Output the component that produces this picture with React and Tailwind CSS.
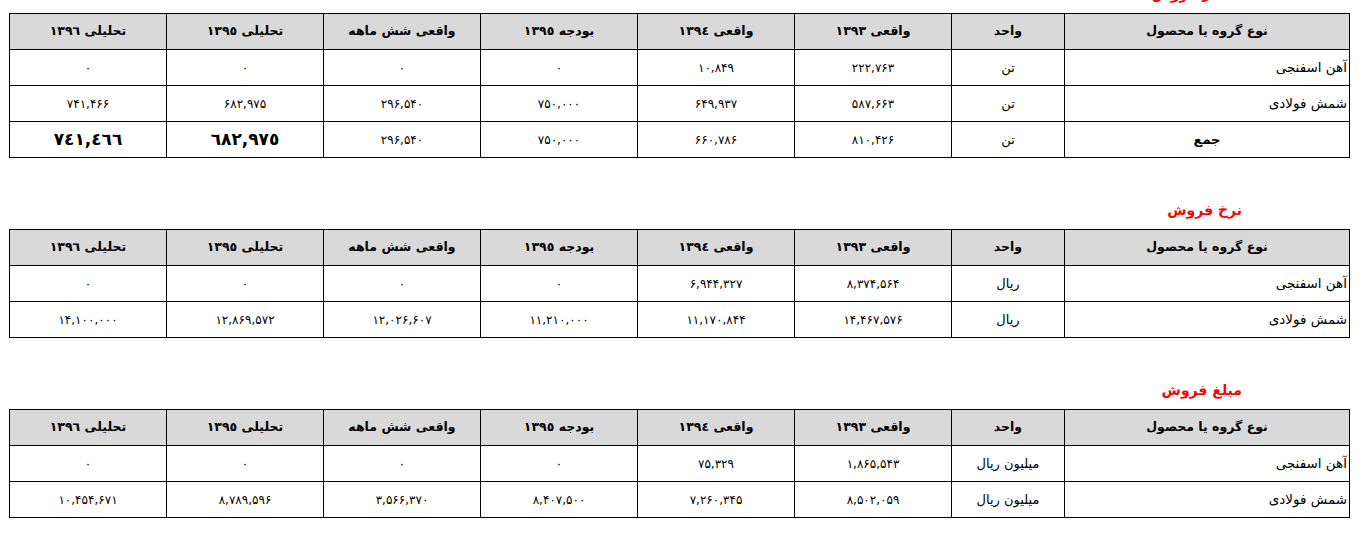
import React from "react";

const headers = [
  "نوع گروه یا محصول",
  "واحد",
  "واقعی ١٣٩٣",
  "واقعی ١٣٩٤",
  "بودجه ١٣٩٥",
  "واقعی شش ماهه",
  "تحلیلی ١٣٩٥",
  "تحلیلی ١٣٩٦",
];

const widths = ["w-[285px]", "w-[113px]", "w-[157px]", "w-[157px]", "w-[157px]", "w-[157px]", "w-[157px]", "w-[157px]"];

const sections = [
  {
    title: "مقدار فروش",
    rows: [
      { name: "آهن اسفنجی", unit: "تن", vals: ["۲۲۲,۷۶۳", "۱۰,۸۴۹", "۰", "۰", "۰", "۰"] },
      { name: "شمش فولادی", unit: "تن", vals: ["۵۸۷,۶۶۳", "۶۴۹,۹۳۷", "۷۵۰,۰۰۰", "۲۹۶,۵۴۰", "۶۸۲,۹۷۵", "۷۴۱,۴۶۶"] },
      { name: "جمع", total: true, unit: "تن", vals: ["۸۱۰,۴۲۶", "۶۶۰,۷۸۶", "۷۵۰,۰۰۰", "۲۹۶,۵۴۰", "٦٨٢,٩٧٥", "٧٤١,٤٦٦"], boldFrom: 4 },
    ],
  },
  {
    title: "نرخ فروش",
    rows: [
      { name: "آهن اسفنجی", unit: "ریال", vals: ["۸,۳۷۴,۵۶۴", "۶,۹۴۴,۳۲۷", "۰", "۰", "۰", "۰"] },
      { name: "شمش فولادی", unit: "ریال", vals: ["۱۴,۴۶۷,۵۷۶", "۱۱,۱۷۰,۸۴۴", "۱۱,۲۱۰,۰۰۰", "۱۲,۰۲۶,۶۰۷", "۱۲,۸۶۹,۵۷۲", "۱۴,۱۰۰,۰۰۰"] },
    ],
  },
  {
    title: "مبلغ فروش",
    rows: [
      { name: "آهن اسفنجی", unit: "میلیون ریال", vals: ["۱,۸۶۵,۵۴۳", "۷۵,۳۲۹", "۰", "۰", "۰", "۰"] },
      { name: "شمش فولادی", unit: "میلیون ریال", vals: ["۸,۵۰۲,۰۵۹", "۷,۲۶۰,۳۴۵", "۸,۴۰۷,۵۰۰", "۳,۵۶۶,۳۷۰", "۸,۷۸۹,۵۹۶", "۱۰,۴۵۴,۶۷۱"] },
    ],
  },
];

function Section({ s }) {
  return (
    <div className="flex flex-col">
      <div className="h-[28px] pr-[108px] text-right text-[14px] font-bold leading-[18px] text-[#ff0000]">
        {s.title}
      </div>
      <table className="w-[1340px] table-fixed border-collapse border border-black">
        <thead>
          <tr className="h-[36px] bg-[#d9d9d9]">
            {headers.map((h, i) => (
              <th key={i} className={`${widths[i]} border border-black p-0 text-center text-[12.5px] font-bold text-black`}>
                {h}
              </th>
            ))}
          </tr>
        </thead>
        <tbody>
          {s.rows.map((r, ri) => (
            <tr key={ri} className="h-[36px]">
              {r.total ? (
                <td className="border border-black p-0 text-center text-[13px] font-bold">{r.name}</td>
              ) : (
                <td className="border border-black py-0 pl-0 pr-[2px] text-right text-[13.5px]">{r.name}</td>
              )}
              <td className="border border-black p-0 text-center text-[13px]">{r.unit}</td>
              {r.vals.map((v, vi) => (
                <td
                  key={vi}
                  className={
                    r.boldFrom !== undefined && vi >= r.boldFrom
                      ? "border border-black p-0 text-center text-[17px] font-bold"
                      : "border border-black p-0 text-center text-[12px]"
                  }
                >
                  {v}
                </td>
              ))}
            </tr>
          ))}
        </tbody>
      </table>
    </div>
  );
}

export default function App() {
  return (
    <div dir="rtl" className="bg-white text-black" style={{ fontFamily: '"DejaVu Sans", sans-serif' }}>
      <div className="-mt-[15px] flex flex-col gap-[43px] pr-[16px] pl-[10px]">
        {sections.map((s, i) => (
          <Section key={i} s={s} />
        ))}
      </div>
    </div>
  );
}
